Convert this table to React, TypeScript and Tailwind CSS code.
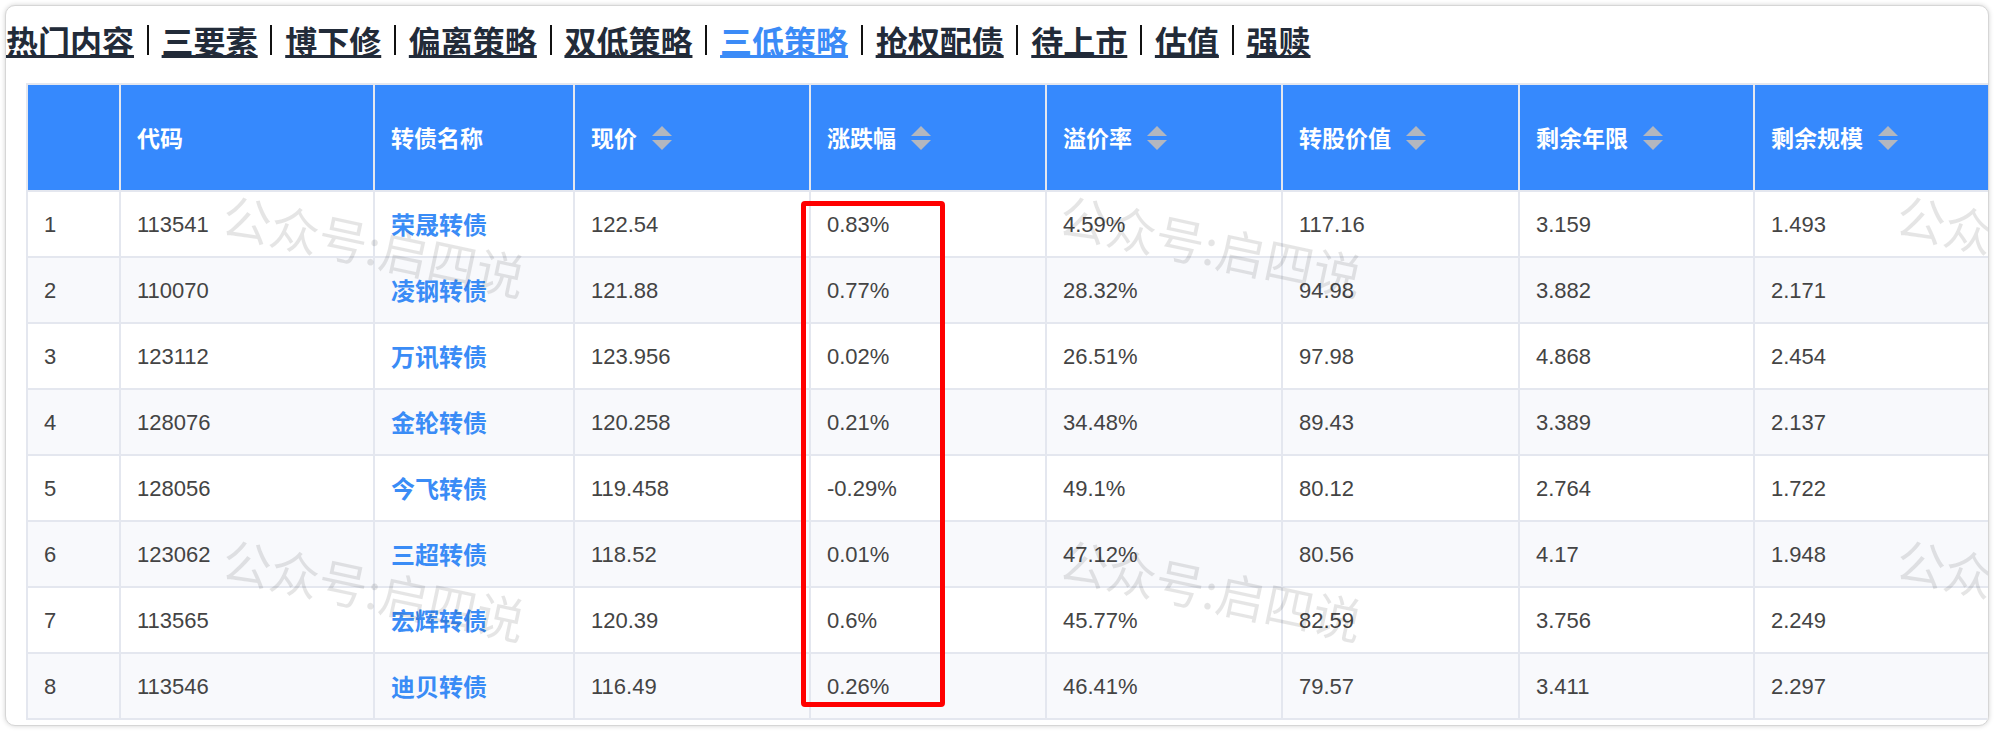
import React from "react";

const NAV = ["热门内容", "三要素", "博下修", "偏离策略", "双低策略", "三低策略", "抢权配债", "待上市", "估值", "强赎"];
const ACTIVE = "三低策略";

const GRID = "grid grid-cols-[93px_254px_200px_236px_236px_236px_237px_235px_240px]";

const COLS = [
  { label: "", sort: false },
  { label: "代码", sort: false },
  { label: "转债名称", sort: false },
  { label: "现价", sort: true },
  { label: "涨跌幅", sort: true },
  { label: "溢价率", sort: true },
  { label: "转股价值", sort: true },
  { label: "剩余年限", sort: true },
  { label: "剩余规模", sort: true },
];

const ROWS = [
  ["1", "113541", "荣晟转债", "122.54", "0.83%", "4.59%", "117.16", "3.159", "1.493"],
  ["2", "110070", "凌钢转债", "121.88", "0.77%", "28.32%", "94.98", "3.882", "2.171"],
  ["3", "123112", "万讯转债", "123.956", "0.02%", "26.51%", "97.98", "4.868", "2.454"],
  ["4", "128076", "金轮转债", "120.258", "0.21%", "34.48%", "89.43", "3.389", "2.137"],
  ["5", "128056", "今飞转债", "119.458", "-0.29%", "49.1%", "80.12", "2.764", "1.722"],
  ["6", "123062", "三超转债", "118.52", "0.01%", "47.12%", "80.56", "4.17", "1.948"],
  ["7", "113565", "宏辉转债", "120.39", "0.6%", "45.77%", "82.59", "3.756", "2.249"],
  ["8", "113546", "迪贝转债", "116.49", "0.26%", "46.41%", "79.57", "3.411", "2.297"],
];

// watermark spots over the table
const MARKS = [
  "left-[223px] top-[182px]",
  "left-[1060px] top-[182px]",
  "left-[1897px] top-[182px]",
  "left-[223px] top-[526px]",
  "left-[1060px] top-[526px]",
  "left-[1897px] top-[526px]",
];

function SortIcon() {
  return (
    <svg width="20" height="24" viewBox="0 0 20 24" className="ml-[15px] shrink-0">
      <path d="M10 0 L20 10 L0 10 Z" fill="#b3b7bf" />
      <path d="M0 14 L20 14 L10 24 Z" fill="#b3b7bf" />
    </svg>
  );
}

export default function App() {
  return (
    <div className="w-[1994px] h-[732px] bg-white p-[5px] font-['Liberation_Sans','Noto_Sans_CJK_SC',sans-serif]">
      <div className="relative h-[721px] overflow-hidden rounded-[10px] border border-[#d6d6d6] bg-white shadow-[0_0_5px_rgba(0,0,0,0.18)]">
        {/* strategy tabs */}
        <nav className="mt-[14px] flex items-center font-['Noto_Sans_CJK_SC',sans-serif] text-[32px] font-bold leading-[40px]">
          {NAV.map((item, i) => (
            <React.Fragment key={item}>
              {i > 0 && <span className="mx-[12.8px] inline-block h-[30px] w-[2px] bg-[#111]" />}
              <a
                className={
                  "underline decoration-[3px] underline-offset-[1px] " +
                  (item === ACTIVE ? "text-[#3b8bf7]" : "text-[#222b39]")
                }
              >
                {item}
              </a>
            </React.Fragment>
          ))}
        </nav>

        {/* table */}
        <div className="relative ml-[20px] mt-[23px] w-max border-t-2 border-l-2 border-[#e4e7ef] text-[22px] text-[#444]">
          <div className={GRID + " bg-[#3689fd]"}>
            {COLS.map((c) => (
              <div
                key={c.label || "idx"}
                className="flex h-[107px] items-center border-r-2 border-b-2 border-[#e4e7ef] pl-[16px] font-['Noto_Sans_CJK_SC',sans-serif] text-[23px] font-bold text-white"
              >
                {c.label}
                {c.sort && <SortIcon />}
              </div>
            ))}
          </div>
          {ROWS.map((r, ri) => (
            <div key={r[0]} className={GRID + " " + (ri % 2 === 1 ? "bg-[#f8f9fc]" : "bg-white")}>
              {r.map((cell, ci) => (
                <div
                  key={ci}
                  className={
                    "flex h-[66px] items-center border-r-2 border-b-2 border-[#e4e7ef] pl-[16px] " +
                    (ci === 2
                      ? "font-['Noto_Sans_CJK_SC',sans-serif] text-[24px] font-semibold text-[#3a8cf6]"
                      : "")
                  }
                >
                  {cell}
                </div>
              ))}
            </div>
          ))}

          {/* red highlight round 涨跌幅 */}
          <div className="pointer-events-none absolute left-[773px] top-[116px] h-[506px] w-[144px] rounded-[4px] border-[5px] border-[#ff0000]" />
        </div>

        {/* watermarks */}
        {MARKS.map((pos) => (
          <span
            key={pos}
            className={
              "pointer-events-none absolute origin-top-left rotate-[12deg] whitespace-nowrap font-['Noto_Sans_CJK_SC',sans-serif] text-[49px] leading-none text-black/10 " +
              pos
            }
          >
            公众号:启四说
          </span>
        ))}
      </div>
    </div>
  );
}
